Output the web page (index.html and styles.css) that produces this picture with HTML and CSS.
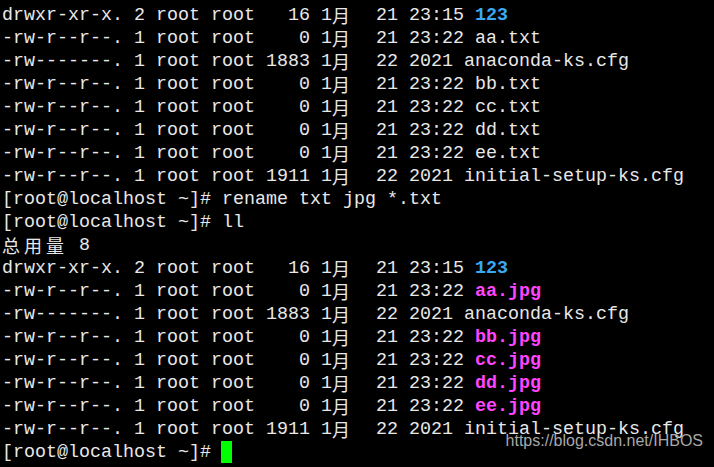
FILE: index.html
```html
<!DOCTYPE html>
<html>
<head>
<meta charset="utf-8">
<link rel="stylesheet" href="styles.css">
</head>
<body>
<div class="term">
<div class="ln">drwxr-xr-x. 2 root root   16 1<span class="w">月</span>  21 23:15 <span class="dir">123</span></div>
<div class="ln">-rw-r--r--. 1 root root    0 1<span class="w">月</span>  21 23:22 aa.txt</div>
<div class="ln">-rw-------. 1 root root 1883 1<span class="w">月</span>  22 2021 anaconda-ks.cfg</div>
<div class="ln">-rw-r--r--. 1 root root    0 1<span class="w">月</span>  21 23:22 bb.txt</div>
<div class="ln">-rw-r--r--. 1 root root    0 1<span class="w">月</span>  21 23:22 cc.txt</div>
<div class="ln">-rw-r--r--. 1 root root    0 1<span class="w">月</span>  21 23:22 dd.txt</div>
<div class="ln">-rw-r--r--. 1 root root    0 1<span class="w">月</span>  21 23:22 ee.txt</div>
<div class="ln">-rw-r--r--. 1 root root 1911 1<span class="w">月</span>  22 2021 initial-setup-ks.cfg</div>
<div class="ln">[root@localhost ~]# rename txt jpg *.txt</div>
<div class="ln">[root@localhost ~]# ll</div>
<div class="ln"><span class="w">总</span><span class="w">用</span><span class="w">量</span> 8</div>
<div class="ln">drwxr-xr-x. 2 root root   16 1<span class="w">月</span>  21 23:15 <span class="dir">123</span></div>
<div class="ln">-rw-r--r--. 1 root root    0 1<span class="w">月</span>  21 23:22 <span class="img">aa.jpg</span></div>
<div class="ln">-rw-------. 1 root root 1883 1<span class="w">月</span>  22 2021 anaconda-ks.cfg</div>
<div class="ln">-rw-r--r--. 1 root root    0 1<span class="w">月</span>  21 23:22 <span class="img">bb.jpg</span></div>
<div class="ln">-rw-r--r--. 1 root root    0 1<span class="w">月</span>  21 23:22 <span class="img">cc.jpg</span></div>
<div class="ln">-rw-r--r--. 1 root root    0 1<span class="w">月</span>  21 23:22 <span class="img">dd.jpg</span></div>
<div class="ln">-rw-r--r--. 1 root root    0 1<span class="w">月</span>  21 23:22 <span class="img">ee.jpg</span></div>
<div class="ln">-rw-r--r--. 1 root root 1911 1<span class="w">月</span>  22 2021 initial-setup-ks.cfg</div>
<div class="ln">[root@localhost ~]# <span class="cursor"></span></div>
</div>
<div class="mark">https://blog.csdn.net/IHBOS</div>
</body>
</html>
```
FILE: styles.css
```css
html, body {
  margin: 0;
  padding: 0;
  background: #000;
  width: 714px;
  height: 467px;
  overflow: hidden;
}
body {
  position: relative;
}
.term {
  padding: 4px 0 0 2px;
  font-family: "Liberation Mono", "DejaVu Sans Mono", monospace;
  font-size: 18.333px;
  color: #e8e8e8;
}
.ln {
  height: 23px;
  line-height: 23px;
  white-space: pre;
}
.w {
  display: inline-block;
  width: 22px;
  text-align: left;
  font-family: "Noto Sans CJK SC", sans-serif;
  font-size: 18px;
  line-height: 23px;
  vertical-align: top;
}
.dir {
  color: #3aa8f2;
  font-weight: bold;
}
.img {
  color: #ff45ff;
  font-weight: bold;
}
.cursor {
  display: inline-block;
  width: 11px;
  height: 22px;
  margin-left: -1px;
  background: #00ff00;
  vertical-align: top;
}
.mark {
  position: absolute;
  right: 11px;
  top: 432px;
  font-family: "Liberation Sans", Arial, sans-serif;
  font-size: 16px;
  color: #a8a8a8;
}
```
